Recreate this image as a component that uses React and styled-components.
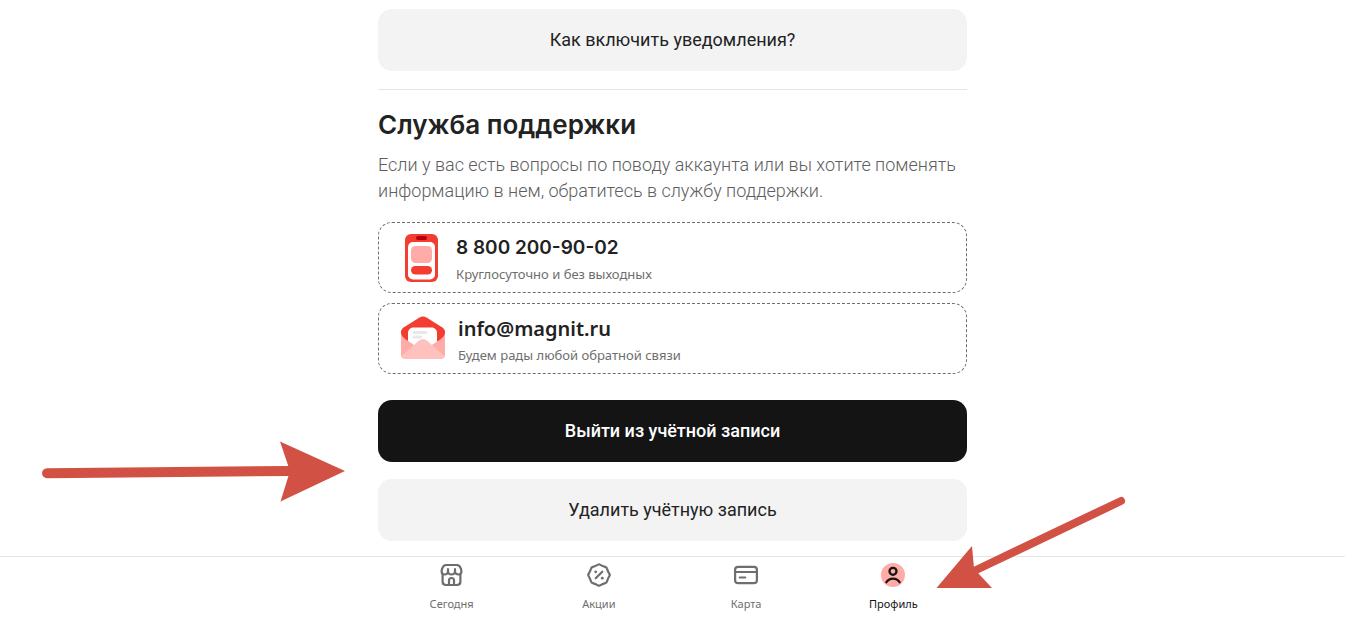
import styled, { createGlobalStyle } from "styled-components";

const GlobalStyle = createGlobalStyle`
  * {
    box-sizing: border-box;
    margin: 0;
  }
  body {
    background: #fff;
    color: #222;
    font-family: "Noto Sans", "Open Sans", sans-serif;
  }
`;

const Page = styled.div`
  display: flex;
  flex-direction: column;
  min-height: 100vh;
  overflow-x: hidden;
`;

const Content = styled.main`
  position: relative;
  width: 100%;
  max-width: 589px;
  margin: 0 auto;
  padding: 9px 0 15px;
`;

const Button = styled.button`
  display: block;
  width: 100%;
  padding: 18px 20px;
  border: none;
  border-radius: 14px;
  font-family: Roboto, sans-serif;
  font-size: 18px;
  line-height: 26px;
  cursor: pointer;
  font-weight: ${(props) => (props.$dark ? 500 : 400)};
  color: ${(props) => (props.$dark ? "#fff" : "#222")};
  background: ${(props) => (props.$dark ? "#141414" : "#f3f3f3")};
`;

const Support = styled.section`
  margin: 18px 0 26px;
  padding-top: 18px;
  border-top: 1px solid #e5e5e5;
  h2 {
    font-family: Inter, sans-serif;
    font-size: 26px;
    line-height: 34px;
    font-weight: 600;
  }
  p {
    margin: 10px 0 18px;
    font-family: Roboto, sans-serif;
    font-size: 18px;
    line-height: 26px;
    font-weight: 300;
    color: #5e5e5e;
  }
`;

const Contacts = styled.div`
  display: flex;
  flex-direction: column;
  gap: 10px;
`;

const ContactCard = styled.a`
  display: flex;
  align-items: center;
  gap: 12px;
  padding: 8px 21px;
  border: 1px dashed #6e6e6e;
  border-radius: 14px;
  color: inherit;
  text-decoration: none;
  svg {
    flex: none;
  }
`;

const ContactValue = styled.span`
  display: block;
  font-family: ${(props) => (props.$numeric ? "Inter" : '"Noto Sans"')}, sans-serif;
  font-size: ${(props) => (props.$numeric ? 19 : 20)}px;
  line-height: 34px;
  font-weight: 600;
`;

const ContactNote = styled.span`
  display: block;
  font-size: 13px;
  line-height: 19px;
  color: #6e6e6e;
`;

const Actions = styled.div`
  display: flex;
  flex-direction: column;
  gap: 17px;
`;

const NavBar = styled.nav`
  position: relative;
  margin-top: auto;
  border-top: 1px solid #e5e5e5;
  background: #fff;
`;

const NavList = styled.div`
  display: grid;
  grid-template-columns: repeat(4, 1fr);
  max-width: 589px;
  margin: 0 auto;
`;

const NavLink = styled.a`
  display: flex;
  flex-direction: column;
  align-items: center;
  gap: 8px;
  padding: 6px 0 5px;
  font-size: 11px;
  line-height: 17px;
  text-decoration: none;
  color: ${(props) => (props.$active ? "#141414" : "#6e6e6e")};
`;

const LogoutArrow = styled.svg`
  position: absolute;
  top: 441px;
  right: calc(100% + 33px);
  pointer-events: none;
`;

const ProfileArrow = styled.svg`
  position: absolute;
  bottom: 28px;
  left: calc(50% + 263px);
  pointer-events: none;
`;

const PhoneIcon = () => (
  <svg width="44" height="50" viewBox="0 0 44 50">
    <rect x="5" y="1" width="33" height="48" rx="6" fill="#f23d30" />
    <rect x="8" y="9" width="27" height="37.500" rx="5" fill="#fff" />
    <rect x="16" y="3" width="11" height="4" rx="2" fill="#b3000f" />
    <rect x="11" y="13" width="21" height="17" rx="4.500" fill="#ffaca8" />
    <rect x="11" y="33" width="21" height="8.500" rx="4.200" fill="#f23d30" />
  </svg>
);

const MailIcon = () => (
  <svg width="46" height="46" viewBox="0 0 46 46">
    <path
      d="M1 20V16c0-2 1-3.500 2.600-4.600L19.500 1.500c2.300-1.400 4.700-1.400 7 0L42.400 11.400C44 12.500 45 14 45 16v5L40 32H6z"
      fill="#f23d30"
    />
    <path d="M8 17.500c0-3.500 2-6 5.500-6h18c3.500 0 5.500 2.500 5.500 6v14H8z" fill="#fff" />
    <rect x="12.500" y="15" width="15" height="3" rx="1.500" fill="#e8e8e8" />
    <rect x="12.500" y="19.500" width="9.500" height="3" rx="1.500" fill="#e8e8e8" />
    <path
      d="M1 17c.5 2.500 2 4.500 4.500 6.200L23 35l17.500-11.800C43 21.500 44.500 19.500 45 17v21.500c0 3-2 4.500-5 4.500H6c-3 0-5-1.500-5-4.500z"
      fill="#ffaca8"
    />
    <path
      d="M1.500 40L18.500 25c2.500-2.200 6.500-2.200 9 0L44.500 40c-1 2-2.500 3-4.500 3H6c-2 0-3.500-1-4.500-3z"
      fill="#ffc1bd"
    />
  </svg>
);

const TodayIcon = () => (
  <svg width="24" height="24" viewBox="0 0 24 24" fill="none" stroke="#6e6e6e" strokeWidth="2.200" strokeLinejoin="round">
    <path d="M2.600 11v7.500C2.600 20.700 4 22 6.100 22h10.800c2.100 0 3.500-1.300 3.500-3.500V11" />
    <path d="M1.600 8.500c0-1 .2-2 .6-3C2.900 3.300 3.900 2 6.100 2h10.800c2.200 0 3.200 1.300 3.900 3.500.4 1 .6 2 .6 3 0 1.700-1.300 3-3.100 3s-3.300-1.300-3.300-3c0 1.700-1.600 3-3.500 3s-3.500-1.300-3.500-3c0 1.700-1.500 3-3.300 3s-3.100-1.300-3.100-3zM8 8.500V6M15 8.500V6" strokeLinecap="round" />
    <path d="M9 22v-4.500a2.500 2.500 0 0 1 5 0V22" />
  </svg>
);

const PromoIcon = () => (
  <svg width="24" height="24" viewBox="0 0 24 24" fill="none" stroke="#6e6e6e" strokeWidth="2.200" strokeLinejoin="round" strokeLinecap="round">
    <path d="M11 1.600Q12 .9 13 1.600Q15 2.900 18.200 3.900Q19.700 4.300 20.100 5.800Q21.100 9 22.400 11Q23.100 12 22.400 13Q21.100 15 20.100 18.200Q19.700 19.700 18.200 20.100Q15 21.100 13 22.400Q12 23.100 11 22.400Q9 21.100 5.800 20.100Q4.300 19.700 3.900 18.200Q2.900 15 1.600 13Q.9 12 1.600 11Q2.900 9 3.900 5.800Q4.300 4.300 5.800 3.900Q9 2.900 11 1.600z" />
    <path d="M15.300 8.700l-6.600 6.600" />
    <circle cx="8.700" cy="8.800" r="1.400" fill="#6e6e6e" stroke="none" />
    <circle cx="15.300" cy="15.200" r="1.400" fill="#6e6e6e" stroke="none" />
  </svg>
);

const CardIcon = () => (
  <svg width="24" height="24" viewBox="0 0 24 24" fill="none" stroke="#6e6e6e" strokeWidth="2.200" strokeLinecap="round">
    <rect x="1.100" y="3.800" width="21.800" height="16.400" rx="3" />
    <path d="M1 9h22M5.800 14.500h5.400" />
  </svg>
);

const ProfileIcon = () => (
  <svg width="24" height="24" viewBox="0 0 24 24" fill="none" stroke="#141414" strokeWidth="2.300">
    <circle cx="12" cy="12" r="12" fill="#ffaca8" stroke="none" />
    <circle cx="12" cy="8.300" r="3.500" />
    <path d="M5.400 19.200c1.600-2.300 3.900-3.500 6.600-3.500s5 1.200 6.600 3.500" strokeLinecap="round" />
  </svg>
);

const contacts = [
  {
    href: "tel:88002009002",
    value: "8 800 200-90-02",
    note: "Круглосуточно и без выходных",
    Icon: PhoneIcon,
    numeric: true,
  },
  {
    href: "mailto:info@magnit.ru",
    value: "info@magnit.ru",
    note: "Будем рады любой обратной связи",
    Icon: MailIcon,
  },
];

const tabs = [
  { href: "#today", label: "Сегодня", Icon: TodayIcon },
  { href: "#promo", label: "Акции", Icon: PromoIcon },
  { href: "#card", label: "Карта", Icon: CardIcon },
  { href: "#profile", label: "Профиль", Icon: ProfileIcon, active: true },
];

const App = () => {
  return (
    <Page>
      <GlobalStyle />
      <Content>
        <Button type="button">Как включить уведомления?</Button>
        <Support>
          <h2>Служба поддержки</h2>
          <p>
            Если у вас есть вопросы по поводу аккаунта или вы хотите поменять
            информацию в нем, обратитесь в службу поддержки.
          </p>
          <Contacts>
            {contacts.map(({ href, value, note, Icon, numeric }) => (
              <ContactCard href={href} key={href}>
                <Icon />
                <span>
                  <ContactValue $numeric={numeric}>{value}</ContactValue>
                  <ContactNote>{note}</ContactNote>
                </span>
              </ContactCard>
            ))}
          </Contacts>
        </Support>
        <Actions>
          <Button type="button" $dark>
            Выйти из учётной записи
          </Button>
          <Button type="button">Удалить учётную запись</Button>
        </Actions>
        <LogoutArrow width="303" height="61" viewBox="0 0 303 61" fill="#d15145">
          <path d="M5 32.300L250 30" stroke="#d15145" strokeWidth="10" strokeLinecap="round" />
          <path d="M238 .5L303 30L238.500 60.500L248 30z" />
        </LogoutArrow>
      </Content>
      <NavBar>
        <NavList>
          {tabs.map(({ href, label, Icon, active }) => (
            <NavLink href={href} key={href} $active={active}>
              <Icon />
              {label}
            </NavLink>
          ))}
        </NavList>
        <ProfileArrow width="190" height="93" viewBox="0 0 190 93" fill="#d15145">
          <path d="M185 5L38 75" stroke="#d15145" strokeWidth="8" strokeLinecap="round" />
          <path d="M.5 92L36 50L38 72L42 77L56 92z" />
        </ProfileArrow>
      </NavBar>
    </Page>
  );
};

export default App;
